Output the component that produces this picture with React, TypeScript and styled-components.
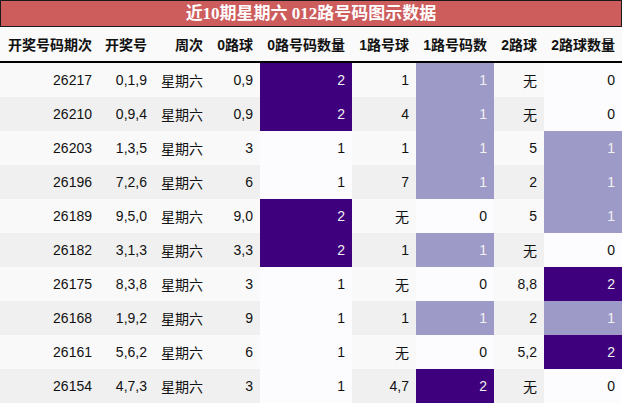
import React from "react";
import styled, { createGlobalStyle } from "styled-components";

const Global = createGlobalStyle`
  html, body { margin: 0; padding: 0; background: #ffffff; }
  body { font-family: "Liberation Sans", "Noto Sans CJK SC", sans-serif; }
`;

const Wrap = styled.div`
  width: 622px;
`;

const Title = styled.div`
  box-sizing: border-box;
  height: 27px;
  border: 1px solid #1a1a1a;
  background: #cd5c5c;
  color: #ffffff;
  font-family: "Liberation Serif", "Noto Sans CJK SC", serif;
  font-weight: bold;
  font-size: 17px;
  line-height: 25px;
  text-align: center;
`;

const Table = styled.table`
  width: 622px;
  border-collapse: collapse;
  table-layout: fixed;
  font-size: 14px;
  color: #111;
`;

const Th = styled.th`
  height: 34px;
  padding: 0 7px 0 0;
  text-align: right;
  font-weight: bold;
  background: #fafafa;
  border-bottom: 2px solid #000;
  white-space: nowrap;
`;

const Row = styled.tr<{ $even: boolean }>`
  background: ${(p) => (p.$even ? "#f0f0f0" : "#f9f9f9")};
`;

const Td = styled.td`
  height: 34px;
  padding: 0 7px 0 0;
  text-align: right;
  white-space: nowrap;
`;

const levels = [
  { bg: "#fcfbfd", fg: "#111" },
  { bg: "#9e9ac8", fg: "#f1f1f1" },
  { bg: "#3f007d", fg: "#f1f1f1" },
];

const HeatTd = styled(Td)<{ $lvl: number }>`
  background: ${(p) => levels[p.$lvl].bg};
  color: ${(p) => levels[p.$lvl].fg};
`;

const widths = [99, 55, 56, 50, 92, 64, 78, 50, 78];
const headers = ["开奖号码期次", "开奖号", "周次", "0路球", "0路号码数量", "1路号球", "1路号码数", "2路球", "2路球数量"];

type R = [string, string, string, number, string, number, string, number];
const rows: R[] = [
  ["26217", "0,1,9", "0,9", 2, "1", 1, "无", 0],
  ["26210", "0,9,4", "0,9", 2, "4", 1, "无", 0],
  ["26203", "1,3,5", "3", 1, "1", 1, "5", 1],
  ["26196", "7,2,6", "6", 1, "7", 1, "2", 1],
  ["26189", "9,5,0", "9,0", 2, "无", 0, "5", 1],
  ["26182", "3,1,3", "3,3", 2, "1", 1, "无", 0],
  ["26175", "8,3,8", "3", 1, "无", 0, "8,8", 2],
  ["26168", "1,9,2", "9", 1, "1", 1, "2", 1],
  ["26161", "5,6,2", "6", 1, "无", 0, "5,2", 2],
  ["26154", "4,7,3", "3", 1, "4,7", 2, "无", 0],
];

export default function App() {
  return (
    <Wrap>
      <Global />
      <Title>近10期星期六 012路号码图示数据</Title>
      <Table>
        <colgroup>
          {widths.map((w, i) => (
            <col key={i} style={{ width: w }} />
          ))}
        </colgroup>
        <thead>
          <tr>
            {headers.map((h) => (
              <Th key={h}>{h}</Th>
            ))}
          </tr>
        </thead>
        <tbody>
          {rows.map((r, i) => (
            <Row key={r[0]} $even={i % 2 === 1}>
              <Td>{r[0]}</Td>
              <Td>{r[1]}</Td>
              <Td>星期六</Td>
              <Td>{r[2]}</Td>
              <HeatTd $lvl={r[3] === 2 ? 2 : 0}>{r[3]}</HeatTd>
              <Td>{r[4]}</Td>
              <HeatTd $lvl={r[5]}>{r[5]}</HeatTd>
              <Td>{r[6]}</Td>
              <HeatTd $lvl={r[7]}>{r[7]}</HeatTd>
            </Row>
          ))}
        </tbody>
      </Table>
    </Wrap>
  );
}
